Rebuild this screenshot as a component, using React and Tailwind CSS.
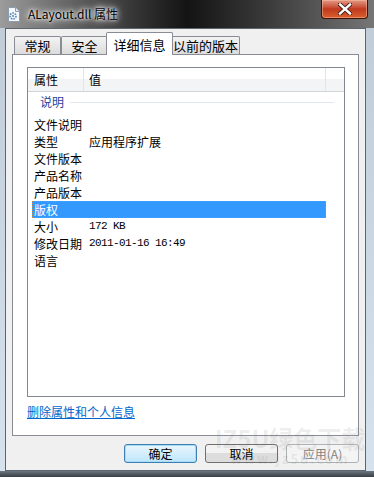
import React from "react";

const cjk = "font-['Noto_Sans_CJK_SC',sans-serif]";

const rows = [
    { name: "文件说明", value: "" },
    { name: "类型", value: "应用程序扩展" },
    { name: "文件版本", value: "" },
    { name: "产品名称", value: "" },
    { name: "产品版本", value: "" },
    { name: "版权", value: "", selected: true },
    { name: "大小", value: "172 KB", mono: true },
    { name: "修改日期", value: "2011-01-16 16:49", mono: true },
    { name: "语言", value: "" },
];

const DllIcon = () => (
    <svg width="14" height="15" viewBox="0 0 14 15">
        <path d="M1.5 0.5h7l4 4v10h-11z" fill="#f4f8fc" stroke="#8a9cb0" />
        <path d="M8.5 0.5v4h4" fill="#dfe8f1" stroke="#8a9cb0" />
        <circle cx="6" cy="9" r="3" fill="none" stroke="#5f87b4" strokeWidth="1.6" strokeDasharray="1.6 1" />
        <circle cx="6" cy="9" r="1.1" fill="#5f87b4" />
    </svg>
);

const Tab = ({ label, active, width }) =>
    active ? (
        <div
            className={`relative z-10 -mb-px h-[23px] ${width} -mx-[2px] flex items-start justify-center pt-[2px] bg-white border border-b-0 border-[#898c95] rounded-t-[2px] text-[13px] text-black`}
        >
            {label}
        </div>
    ) : (
        <div
            className={`h-[18px] ${width} flex items-center justify-center bg-gradient-to-b from-[#f3f3f3] to-[#dcdcdc] border border-b-0 border-[#898c95] rounded-t-[2px] text-[13px] text-black`}
        >
            {label}
        </div>
    );

const App = () => {
    return (
        <div className={`relative w-[374px] h-[477px] flex flex-col bg-gradient-to-b from-[#bfcbd7] to-[#d6e2ee] overflow-hidden ${cjk}`}>
            {/* title bar */}
            <div className="relative h-[28px] flex items-center bg-gradient-to-r from-[#9c9c9c] via-[#141414] to-[#767676]">
                <div className="ml-[7px] mt-[1px]">
                    <DllIcon />
                </div>
                <span className="ml-[7px] text-[12px] text-black [text-shadow:0_0_6px_#fff,0_0_10px_#fff,0_0_3px_#fff]">
                    ALayout.dll 属性
                </span>
                <div className="absolute left-[321px] top-0 w-[47px] h-[19px] rounded-b-[4px] border border-t-0 border-[#3f1208] bg-gradient-to-b from-[#e39a85] via-[#c0391f] to-[#d8602c] flex items-center justify-center shadow-[inset_0_0_0_1px_rgba(255,200,180,0.45)]">
                    <svg width="14" height="12" viewBox="0 0 14 12">
                        <path d="M2 1.5l10 9M12 1.5l-10 9" stroke="#3a1a14" strokeWidth="4.2" strokeLinecap="square" />
                        <path d="M2 1.5l10 9M12 1.5l-10 9" stroke="#ffffff" strokeWidth="2.4" strokeLinecap="square" />
                    </svg>
                </div>
            </div>

            {/* client area */}
            <div className="ml-[5px] w-[361px] h-[443px] flex flex-col bg-[#f0f0f0] border border-[#5c6670] px-[6px] pt-[3px]">
                <div className="h-[22px] flex items-end pl-[2px]">
                    <Tab label="常规" width="w-[47px]" />
                    <Tab label="安全" width="w-[47px]" />
                    <Tab label="详细信息" width="w-[67px]" active />
                    <Tab label="以前的版本" width="w-[69px]" />
                </div>

                <div className="w-[347px] h-[382px] bg-white border border-[#898c95] flex flex-col">
                    <div className="ml-[14px] mt-[12px] w-[318px] h-[330px] border border-[#828790] flex flex-col text-[12px] text-black">
                        <div className="h-[24px] flex items-stretch border-b border-[#d5d5d5] bg-gradient-to-b from-white from-50% to-[#f3f4f6] to-50%">
                            <div className="w-[56px] flex items-center pl-[6px] border-r border-[#e3e4e6]">属性</div>
                            <div className="w-[242px] flex items-center pl-[5px] border-r border-[#e3e4e6]">值</div>
                            <div className="flex-1" />
                        </div>

                        <div className="h-[20px] flex items-center pl-[12px] pr-[10px] gap-[6px]">
                            <span className="text-[#1e3f9e]">说明</span>
                            <div className="flex-1 h-px bg-[#e2e7ee]" />
                        </div>

                        <div className="mt-[4px] ml-[4px] w-[294px] flex flex-col">
                            {rows.map((r) => (
                                <div
                                    key={r.name}
                                    className={`h-[17px] flex items-center ${
                                        r.selected
                                            ? "bg-[#3399ff] text-white outline-1 outline-dotted outline-[#c88a3a] -outline-offset-1"
                                            : ""
                                    }`}
                                >
                                    <span className="w-[57px] pl-[2px]">{r.name}</span>
                                    <span className={r.mono ? "font-['Liberation_Mono',monospace] text-[11px] tracking-[-0.6px]" : ""}>
                                        {r.value}
                                    </span>
                                </div>
                            ))}
                        </div>
                    </div>

                    <a href="#" className="ml-[14px] mt-[8px] w-fit leading-[14px] text-[12px] text-[#0066cc] underline">
                        删除属性和个人信息
                    </a>
                </div>

                <div className="mt-[8px] flex justify-end gap-[8px] text-[12px]">
                    <button className="w-[73px] h-[19px] rounded-[3px] border border-[#3c7fb1] bg-gradient-to-b from-[#eaf6fd] to-[#bee6fd] shadow-[inset_0_0_0_1px_#a8dbf6] text-black">
                        确定
                    </button>
                    <button className="w-[73px] h-[19px] rounded-[3px] border border-[#707070] bg-gradient-to-b from-[#f2f2f2] from-50% to-[#dddddd] to-50% text-black">
                        取消
                    </button>
                    <button className="w-[73px] h-[19px] rounded-[3px] border border-[#adb2b5] bg-[#f4f4f4] text-[#838383]">
                        应用(A)
                    </button>
                </div>
            </div>

            <div className="flex-1 bg-gradient-to-b from-[#6b7580] to-[#3a3f44]" />

            {/* watermark */}
            <div className="pointer-events-none absolute left-[212px] top-[426px] w-[156px] flex flex-col items-center leading-none text-[rgba(120,120,120,0.13)] font-bold">
                <span className="text-[24px]">IZ5U绿色下载</span>
                <span className="mt-[2px] text-[13px] tracking-[2px]">www.jz5u.com</span>
            </div>
        </div>
    );
};

export default App;
